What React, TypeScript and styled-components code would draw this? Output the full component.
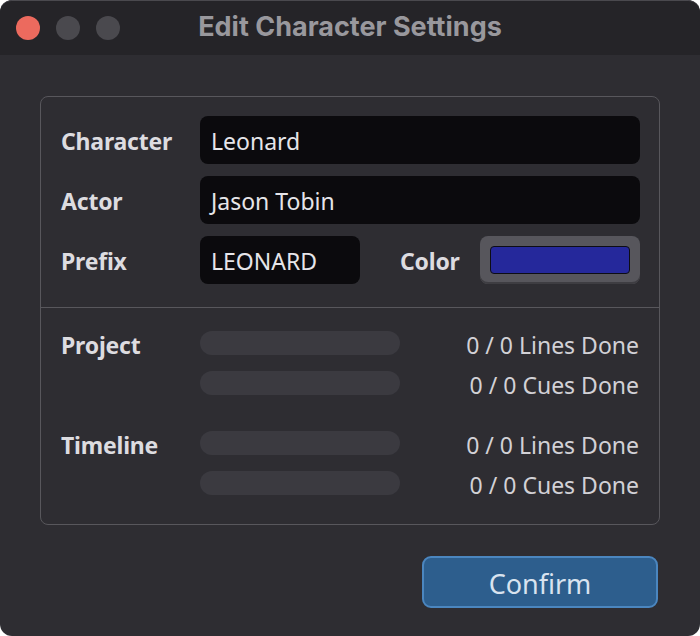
import React from "react";
import styled, { createGlobalStyle } from "styled-components";

const GlobalStyle = createGlobalStyle`
  html, body {
    margin: 0;
    padding: 0;
    background: #ffffff;
  }
  #root {
    width: 700px;
    height: 636px;
  }
`;

const Window = styled.div`
  width: 700px;
  height: 636px;
  box-sizing: border-box;
  display: flex;
  flex-direction: column;
  background: #2e2d32;
  border-radius: 12px;
  overflow: hidden;
  font-family: "Noto Sans", "Open Sans", sans-serif;
`;

const TitleBar = styled.div`
  height: 55px;
  flex-shrink: 0;
  display: flex;
  align-items: center;
  position: relative;
  background: #252428;
  border-top: 1px solid #4a494e;
  border-radius: 12px 12px 0 0;
  box-sizing: border-box;
`;

const Lights = styled.div`
  display: flex;
  gap: 16px;
  padding-left: 16px;
`;

const Light = styled.span<{ $color: string }>`
  width: 24px;
  height: 24px;
  border-radius: 50%;
  background: ${(p) => p.$color};
`;

const Title = styled.div`
  position: absolute;
  left: 0;
  right: 0;
  top: 8px;
  text-align: center;
  font-family: Inter, "Liberation Sans", sans-serif;
  font-weight: 700;
  font-size: 27px;
  line-height: 36px;
  color: #99989d;
  pointer-events: none;
`;

const Body = styled.div`
  flex: 1;
  display: flex;
  flex-direction: column;
  padding: 41px 40px 28px 40px;
`;

const Panel = styled.div`
  border: 1px solid #58575c;
  border-radius: 8px;
  display: flex;
  flex-direction: column;
`;

const FieldSection = styled.div`
  display: flex;
  flex-direction: column;
  gap: 12px;
  padding: 19px 19px 23px 20px;
  border-bottom: 1px solid #58575c;
`;

const Row = styled.div`
  display: flex;
  align-items: center;
  height: 48px;
`;

const Label = styled.div<{ $width?: number }>`
  width: ${(p) => (p.$width ? `${p.$width}px` : "139px")};
  flex-shrink: 0;
  padding-top: 2px;
  font-weight: 700;
  font-size: 23px;
  color: #dddce0;
  letter-spacing: -0.2px;
`;

const Input = styled.div<{ $width?: number }>`
  ${(p) => (p.$width ? `width: ${p.$width}px;` : "flex: 1;")}
  height: 48px;
  box-sizing: border-box;
  display: flex;
  align-items: center;
  padding: 2px 0 0 11px;
  background: #0b0a0d;
  border-radius: 8px;
  font-size: 23px;
  color: #e6e5e9;
`;

const ColorGroup = styled.div`
  margin-left: auto;
  display: flex;
  align-items: center;
`;

const ColorButton = styled.div`
  width: 160px;
  height: 48px;
  box-sizing: border-box;
  padding: 10px 10px 12px 10px;
  background: #57565c;
  border-radius: 8px;
  box-shadow: inset 0 -2px 0 #3e3d42;
`;

const Swatch = styled.div<{ $color: string }>`
  height: 100%;
  border-radius: 4px;
  border: 1px solid #0d0d14;
  background: ${(p) => p.$color};
`;

const StatsSection = styled.div`
  display: flex;
  flex-direction: column;
  gap: 36px;
  padding: 23px 20px 29px 20px;
`;

const StatGroup = styled.div`
  display: grid;
  grid-template-columns: 139px 200px 1fr;
  grid-auto-rows: 24px;
  row-gap: 16px;
  align-items: center;
`;

const StatLabel = styled.div`
  grid-row: 1;
  padding-top: 3px;
  font-weight: 700;
  font-size: 23px;
  color: #dddce0;
  letter-spacing: -0.2px;
`;

const Bar = styled.div<{ $row: number }>`
  grid-column: 2;
  grid-row: ${(p) => p.$row};
  height: 24px;
  border-radius: 12px;
  background: #3b3a40;
`;

const StatText = styled.div<{ $row: number }>`
  grid-column: 3;
  grid-row: ${(p) => p.$row};
  padding-top: 3px;
  text-align: right;
  font-size: 23px;
  color: #d2d1d6;
  white-space: nowrap;
`;

const Footer = styled.div`
  display: flex;
  justify-content: flex-end;
  margin-top: 31px;
  padding-right: 2px;
`;

const ConfirmButton = styled.button`
  width: 236px;
  height: 52px;
  box-sizing: border-box;
  padding: 2px 0 0 0;
  background: #2d5e8d;
  border: 2px solid #4b86bf;
  border-radius: 9px;
  font-family: "Noto Sans", "Open Sans", sans-serif;
  font-size: 27px;
  color: #d9e3ef;
  cursor: pointer;
`;

const stats = [
  { label: "Project", lines: "0 / 0 Lines Done", cues: "0 / 0 Cues Done" },
  { label: "Timeline", lines: "0 / 0 Lines Done", cues: "0 / 0 Cues Done" },
];

export default function App() {
  return (
    <>
      <GlobalStyle />
      <Window>
        <TitleBar>
          <Lights>
            <Light $color="#ec6a5e" />
            <Light $color="#4a494e" />
            <Light $color="#4a494e" />
          </Lights>
          <Title>Edit Character Settings</Title>
        </TitleBar>
        <Body>
          <Panel>
            <FieldSection>
              <Row>
                <Label>Character</Label>
                <Input>Leonard</Input>
              </Row>
              <Row>
                <Label>Actor</Label>
                <Input>Jason Tobin</Input>
              </Row>
              <Row>
                <Label>Prefix</Label>
                <Input $width={160}>LEONARD</Input>
                <ColorGroup>
                  <Label $width={80}>Color</Label>
                  <ColorButton>
                    <Swatch $color="#25289b" />
                  </ColorButton>
                </ColorGroup>
              </Row>
            </FieldSection>
            <StatsSection>
              {stats.map((s) => (
                <StatGroup key={s.label}>
                  <StatLabel>{s.label}</StatLabel>
                  <Bar $row={1} />
                  <StatText $row={1}>{s.lines}</StatText>
                  <Bar $row={2} />
                  <StatText $row={2}>{s.cues}</StatText>
                </StatGroup>
              ))}
            </StatsSection>
          </Panel>
          <Footer>
            <ConfirmButton>Confirm</ConfirmButton>
          </Footer>
        </Body>
      </Window>
    </>
  );
}
